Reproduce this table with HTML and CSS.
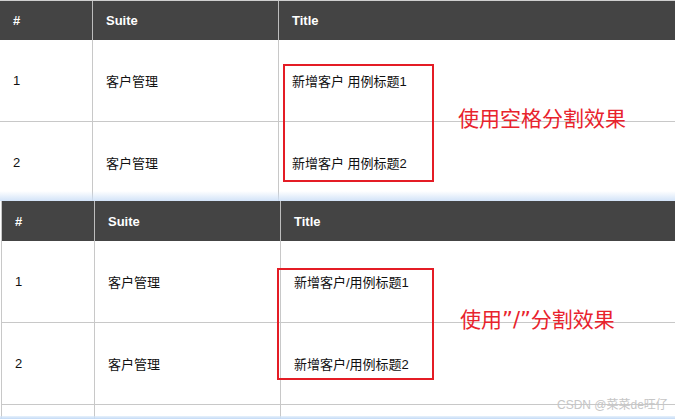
FILE: index.html
```html
<!DOCTYPE html>
<html lang="zh-CN">
<head>
<meta charset="utf-8">
<title>Suite Title</title>
<link rel="stylesheet" href="styles.css">
</head>
<body>
<div class="page">
  <section class="shot shot-one">
    <div class="grid grid-one">
      <div class="row head"><div class="cell">#</div><div class="cell">Suite</div><div class="cell">Title</div></div>
      <div class="row body"><div class="cell">1</div><div class="cell">客户管理</div><div class="cell">新增客户 用例标题1</div></div>
      <div class="row body"><div class="cell">2</div><div class="cell">客户管理</div><div class="cell">新增客户 用例标题2</div></div>
    </div>
    <div class="fade"></div>
  </section>
  <section class="shot shot-two">
    <div class="grid grid-two">
      <div class="row head"><div class="cell">#</div><div class="cell">Suite</div><div class="cell">Title</div></div>
      <div class="row body"><div class="cell">1</div><div class="cell">客户管理</div><div class="cell">新增客户/用例标题1</div></div>
      <div class="row body"><div class="cell">2</div><div class="cell">客户管理</div><div class="cell">新增客户/用例标题2</div></div>
      <div class="row body"><div class="cell"></div><div class="cell"></div><div class="cell"></div></div>
    </div>
    <div class="edge"></div>
  </section>

  <div class="mark mark-one"></div>
  <div class="mark mark-two"></div>
  <div class="note note-one">使用空格分割效果</div>
  <div class="note note-two">使用”/”分割效果</div>
  <div class="watermark">CSDN @菜菜de旺仔</div>
</div>
</body>
</html>
```

FILE: styles.css
```css
html, body {
  margin: 0;
  padding: 0;
  background: #fff;
}

.page {
  position: relative;
  width: 675px;
  height: 419px;
  overflow: hidden;
  font-family: "Liberation Sans", "Noto Sans CJK SC", sans-serif;
  color: #111;
}

.shot {
  position: relative;
  overflow: hidden;
}

.shot-one {
  height: 201px;
}

.shot-two {
  height: 218px;
}

.grid {
  width: 700px;
}

.grid-one {
  border-top: 1px solid #cfcfcf;
}

.grid-two {
  margin-left: 1px;
  border-left: 1px solid #c8c8c8;
}

.row {
  display: grid;
  grid-template-columns: 92px 186px 1fr;
}

.cell {
  display: flex;
  align-items: center;
  padding-left: 13px;
  font-size: 13px;
}

.cell + .cell {
  border-left: 1px solid #c8c8c8;
}

.head {
  height: 39px;
  background: #444444;
}

.grid-two .head {
  height: 40px;
}

.head .cell {
  color: #fff;
  font-weight: bold;
  font-size: 13px;
}

.head .cell + .cell {
  border-left-color: #bdbdbd;
}

.body {
  height: 81px;
}

.body + .body {
  border-top: 1px solid #c8c8c8;
}

.fade {
  position: absolute;
  left: 0;
  right: 0;
  bottom: 0;
  height: 10px;
  background: linear-gradient(to bottom, rgba(225, 238, 252, 0), rgba(205, 224, 247, 0.9));
}

.edge {
  position: absolute;
  left: 0;
  right: 0;
  bottom: 0;
  height: 3px;
  background: linear-gradient(to bottom, rgba(215, 232, 250, 0.6), #c3daf5);
}

.mark {
  position: absolute;
  border: 2px solid #e41c25;
  box-sizing: border-box;
}

.mark-one {
  left: 283px;
  top: 64px;
  width: 151px;
  height: 118px;
}

.mark-two {
  left: 277px;
  top: 268px;
  width: 157px;
  height: 112px;
}

.note {
  position: absolute;
  font-family: "Liberation Sans", "Noto Sans CJK SC", sans-serif;
  font-size: 21px;
  line-height: 21px;
  color: #e8232d;
  white-space: nowrap;
}

.note-one {
  left: 458px;
  top: 108px;
}

.note-two {
  left: 460px;
  top: 310px;
  font-family: "DejaVu Sans", "Noto Sans CJK SC", sans-serif;
}

.watermark {
  position: absolute;
  left: 557px;
  top: 397px;
  font-size: 12px;
  line-height: 16px;
  color: #c6c6c6;
  white-space: nowrap;
}
```
